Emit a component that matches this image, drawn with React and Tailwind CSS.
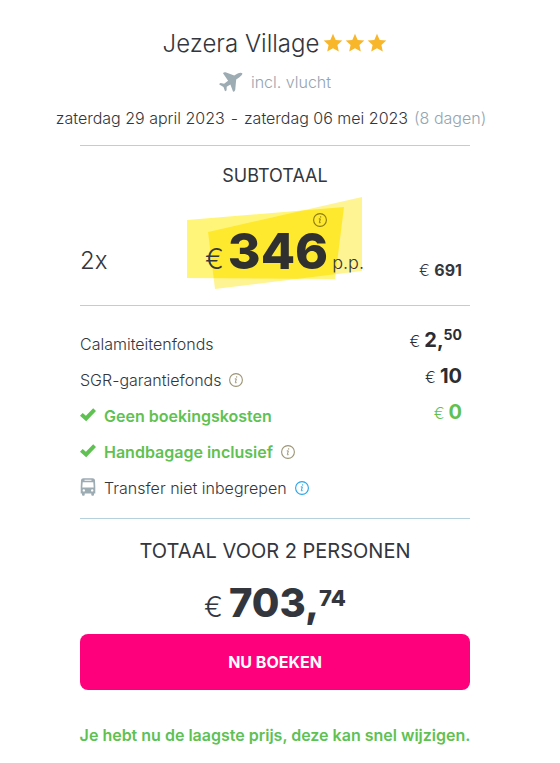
import React from "react";

function Star() {
  return (
    <svg viewBox="0 0 20 20" className="size-5" fill="#f8b62b" aria-hidden="true">
      <path d="M10 .8l2.700 6.100 6.600.7-4.900 4.500 1.400 6.500L10 15.300l-5.800 3.300 1.400-6.500L.7 7.600l6.600-.7z" />
    </svg>
  );
}

function Info({ className }) {
  return (
    <svg viewBox="0 0 14 14" className={"size-3.5 shrink-0 " + className} fill="none" stroke="currentColor" role="img" aria-label="Informatie">
      <circle cx="7" cy="7" r="6.4" strokeWidth="1.1" />
      <path d="M5.8 5.9h1.5l-.9 3.6c-.1.6.5.5 1.2.1" strokeWidth="1" />
      <circle cx="7.6" cy="3.9" r=".7" fill="currentColor" stroke="none" />
    </svg>
  );
}

function Check() {
  return (
    <svg viewBox="0 0 16 14" className="mb-0.5 h-3.5 w-4 shrink-0" fill="#5fc152" aria-hidden="true">
      <path d="M0 7.700l2.700-2.800 3.200 2.800L13.200.3 16 3 6.200 13.200z" />
    </svg>
  );
}

function Plane() {
  return (
    <svg viewBox="0 0 24 20" className="h-5 w-6" fill="#9dabb3" aria-hidden="true">
      <path d="M4 1.200C4.600.3 5.600 0 6.500.3l8.700 3.300 3-1.900C20.300.5 22.900.4 23.300 1.300c.4 1-1.200 2.800-3.200 4.100l-2.900 2-1 10.600c-.1.900-1.300 1.900-2.100 1.700l-2.700-7.300-3.700 2.300-.1 3.400c-.1.700-1 1.300-1.600 1.200l-1.500-4.200L.3 12.400c-.1-.6.700-1.400 1.400-1.400l3.400.7 4-2.900z" />
    </svg>
  );
}

function Bus() {
  return (
    <svg viewBox="0 0 16 18" className="mb-0.5 h-[18px] w-4 shrink-0" aria-hidden="true">
      <path fill="#9dabb3" fillRule="evenodd" d="M3.500.3h9c1.400 0 2.300.7 2.500 2l.3 6.700v6.500H14V17c0 1-2.700 1-2.700 0v-1.500H4.700V17c0 1-2.700 1-2.700 0v-1.500H.7V9L1 2.300C1.200 1 2.100.3 3.500.3zM4.500 1.700v1.100h7V1.700zM2.700 4.200L2.300 9.500h11.400l-.4-5.300zM3.800 11.200a1.200 1.200 0 100 2.400 1.200 1.200 0 000-2.400zm8.400 0a1.200 1.200 0 100 2.400 1.200 1.200 0 000-2.400z" />
    </svg>
  );
}

function Row({ children, price, cents, green }) {
  return (
    <li className="flex h-9 items-center justify-between pr-2">
      <span className="flex items-center gap-2">{children}</span>
      {price && (
        <span className={"flex items-baseline gap-1 pb-2 " + (green ? "text-[#5fc152]" : "text-[#2b2d33]")}>
          <span className="font-light">€</span>
          <span className="text-xl leading-6 font-bold">
            {price}
            {cents && <sup className="text-sm">{cents}</sup>}
          </span>
        </span>
      )}
    </li>
  );
}

export default function App() {
  return (
    <main className="bg-white pt-7 pr-[90px] pb-4 pl-20 font-['Inter',sans-serif] text-base leading-5 text-[#33363d]">
      <header className="flex flex-col items-center">
        <h1 className="flex items-center gap-1 text-2xl leading-8 font-light">
          Jezera Village
          <span className="flex gap-0.5 pb-0.5" role="img" aria-label="3 sterren">
            <Star />
            <Star />
            <Star />
          </span>
        </h1>
        <p className="mt-3 flex items-center gap-2 font-light text-[#94a5b1]">
          <Plane />
          incl. vlucht
        </p>
        <p className="-mx-12 mt-4 flex gap-1.5 pr-2 font-light whitespace-nowrap">
          <span>zaterdag 29 april 2023</span>
          <span>-</span>
          <span>zaterdag 06 mei 2023</span>
          <span className="text-[#94a5b1]">(8 dagen)</span>
        </p>
      </header>

      <section className="mt-[17px] border-t border-[#b5d2dc] pt-4">
        <h2 className="text-center text-lg leading-7">SUBTOTAAL</h2>
        <div className="mt-[7px] grid h-[108px] grid-cols-[1fr_auto_1fr]">
          <span className="self-end pb-[30px] text-2xl leading-7 font-light">2x</span>
          <div className="relative h-[92px] w-[176px]">
            <svg viewBox="0 0 176 92" className="absolute inset-0 h-full w-full" aria-hidden="true">
              <clipPath id="front">
                <path d="M0 23L157 10l-9 72L0 81z" />
              </clipPath>
              <path d="M0 23L157 10l-9 72L0 81z" fill="#fff578" />
              <path d="M21 35L175 0v74L28 92z" fill="#fff494" />
              <path d="M21 35L175 0v74L28 92z" fill="#ffe92f" clipPath="url(#front)" />
            </svg>
            <div className="relative flex items-baseline gap-1 pt-7 pl-[18px] whitespace-nowrap">
              <span className="text-[28px] font-light">€</span>
              <strong className="text-[50px] leading-[52px] font-extrabold text-[#303030]">346</strong>
              <span className="text-lg font-light">p.p.</span>
            </div>
            <Info className="absolute top-4 right-9 text-[#8b7a10]" />
          </div>
          <span className="self-end justify-self-end pr-2 pb-[25px]">
            <span className="font-light">€</span> <strong>691</strong>
          </span>
        </div>
      </section>

      <section className="border-t border-[#b5d2dc] pt-5 pb-3">
        <ul className="font-light">
          <Row price="2," cents="50">Calamiteitenfonds</Row>
          <Row price="10">
            SGR-garantiefonds
            <Info className="text-[#9c9576]" />
          </Row>
          <Row price="0" green>
            <Check />
            <span className="font-semibold text-[#5fc152]">Geen boekingskosten</span>
          </Row>
          <Row>
            <Check />
            <span className="font-semibold text-[#5fc152]">Handbagage inclusief</span>
            <Info className="text-[#9c9576]" />
          </Row>
          <Row>
            <Bus />
            <span>Transfer niet inbegrepen</span>
            <Info className="text-[#27a5e8]" />
          </Row>
        </ul>
      </section>

      <section className="border-t border-[#b5d2dc] pt-[18px] text-center">
        <h2 className="text-xl leading-7">TOTAAL VOOR 2 PERSONEN</h2>
        <p className="mt-3 flex h-[57px] items-baseline justify-center gap-1.5">
          <span className="text-[28px] font-light">€</span>
          <strong className="text-[40px] leading-[52px] font-extrabold">
            703,<sup className="text-[22px]">74</sup>
          </strong>
        </p>
        <button type="button" className="h-14 w-full rounded-lg bg-[#ff007d] text-base font-bold text-white">
          NU BOEKEN
        </button>
        <p className="-mx-4 mt-[35px] font-semibold text-[#5fc152]">
          Je hebt nu de laagste prijs, deze kan snel wijzigen.
        </p>
      </section>
    </main>
  );
}
